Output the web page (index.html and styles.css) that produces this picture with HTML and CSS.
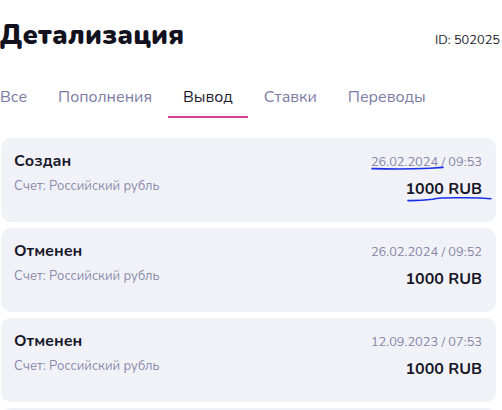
FILE: index.html
```html
<!DOCTYPE html>
<html lang="ru">
<head>
<meta charset="utf-8">
<link rel="stylesheet" href="styles.css">
</head>
<body>
<div class="page">
  <header class="head">
    <h1 class="title">Детализация</h1>
    <span class="uid">ID: 502025</span>
  </header>
  <nav class="tabs">
    <span class="tab">Все</span>
    <span class="tab">Пополнения</span>
    <span class="tab active">Вывод</span>
    <span class="tab">Ставки</span>
    <span class="tab">Переводы</span>
  </nav>
  <div class="list">
    <div class="card">
      <div class="row">
        <span class="status">Создан</span>
        <span class="date marked-date">26.02.2024 / 09:53
          <svg class="mark mark-date" viewBox="0 0 74 4" preserveAspectRatio="none"><path d="M1 2.6 C 20 3.2, 45 3.0, 60 2.2 C 66 1.8, 70 1.6, 73 1.4" /></svg>
        </span>
      </div>
      <div class="row row2">
        <span class="acc">Счет: Российский рубль</span>
        <span class="amount marked-amount">1000 RUB
          <svg class="mark mark-amount" viewBox="0 0 86 6" preserveAspectRatio="none"><path d="M1 4.6 C 10 4.8, 18 4.2, 26 3.2 C 32 1.6, 45 1.6, 60 1.8 C 72 1.9, 80 2.4, 85 2.8" /></svg>
        </span>
      </div>
    </div>
    <div class="card">
      <div class="row">
        <span class="status">Отменен</span>
        <span class="date">26.02.2024 / 09:52</span>
      </div>
      <div class="row row2">
        <span class="acc">Счет: Российский рубль</span>
        <span class="amount">1000 RUB</span>
      </div>
    </div>
    <div class="card">
      <div class="row">
        <span class="status">Отменен</span>
        <span class="date">12.09.2023 / 07:53</span>
      </div>
      <div class="row row2">
        <span class="acc">Счет: Российский рубль</span>
        <span class="amount">1000 RUB</span>
      </div>
    </div>
    <div class="card"></div>
  </div>
</div>
</body>
</html>
```
FILE: styles.css
```css
* { box-sizing: border-box; }
html, body { margin: 0; padding: 0; background: #ffffff; }
body {
  font-family: "Nunito", "Lato", "Noto Sans", sans-serif;
  color: #161629;
  overflow: hidden;
  width: 502px;
  height: 410px;
}
.head {
  display: flex;
  justify-content: space-between;
  align-items: baseline;
  padding-top: 17px;
  padding-right: 2px;
}
.title {
  margin: 0;
  font-size: 27px;
  font-weight: 900;
  line-height: 38px;
  color: #12121f;
  letter-spacing: 0.2px;
}
.uid {
  font-size: 12.8px;
  color: #1c1c2c;
}
.tabs {
  display: flex;
  margin-top: 31px;
  margin-left: -15.5px;
}
.tab {
  padding: 0 15.5px;
  font-size: 16px;
  line-height: 22px;
  color: #7b7ba5;
  height: 32px;
  border-bottom: 2px solid transparent;
}
.tab.active {
  color: #1c1c2c;
  border-bottom-color: #d63f8c;
}
.list {
  display: flex;
  flex-direction: column;
  gap: 6px;
  margin-top: 20px;
  padding-left: 1px;
  padding-right: 6px;
}
.card {
  background: #f1f2f8;
  border-radius: 10px;
  height: 84px;
  flex: none;
  padding: 12px 14px 0 13px;
}
.row {
  display: flex;
  justify-content: space-between;
  align-items: baseline;
}
.row2 {
  margin-top: 5px;
  align-items: flex-start;
}
.status {
  font-size: 16px;
  font-weight: 700;
  color: #161629;
}
.date {
  font-size: 12.8px;
  color: #8585a6;
}
.acc {
  font-size: 13px;
  color: #8a8aab;
}
.amount {
  font-size: 16px;
  font-weight: 700;
  color: #161629;
  margin-top: 1px;
}
.marked-date, .marked-amount { position: relative; }
.mark {
  position: absolute;
  fill: none;
  stroke: #1a2ee8;
  stroke-width: 1.6;
  stroke-linecap: round;
  overflow: visible;
}
.mark path { vector-effect: non-scaling-stroke; }
.mark-date { left: 0; bottom: 1px; width: 73px; height: 4px; }
.mark-amount { left: 2px; bottom: -2px; width: 85px; height: 6px; }
```
